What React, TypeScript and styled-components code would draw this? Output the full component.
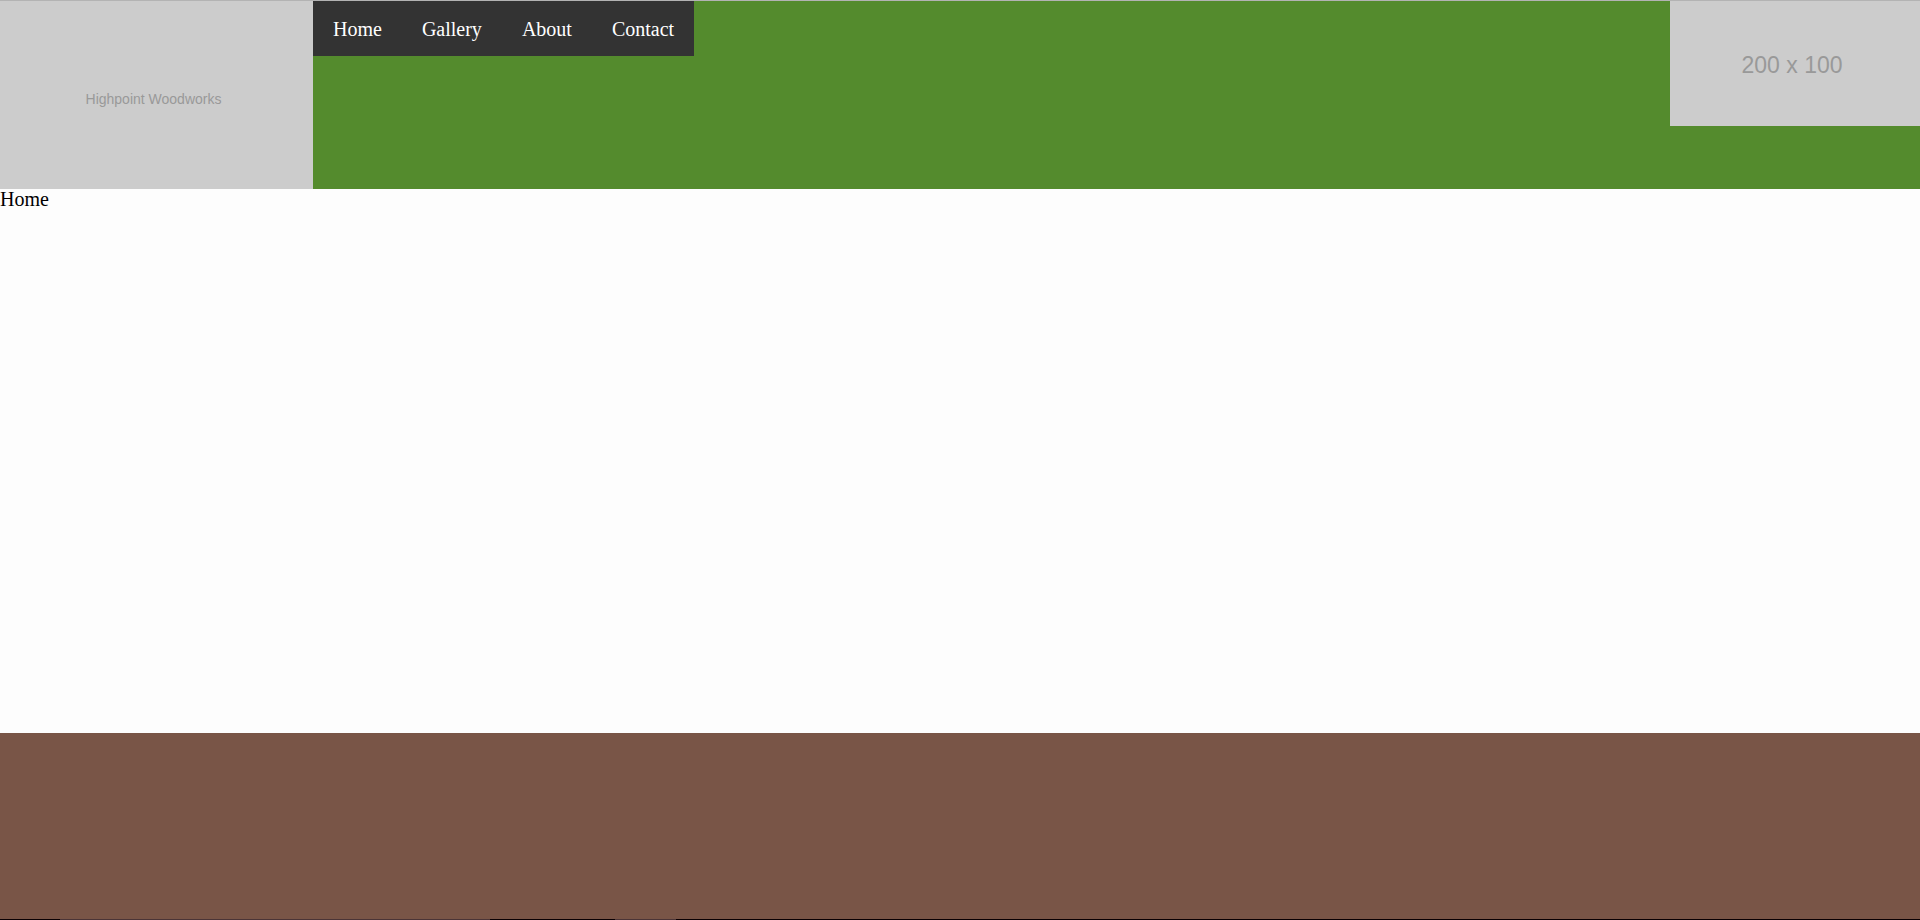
import React from "react";
import styled, { createGlobalStyle } from "styled-components";

const GlobalStyle = createGlobalStyle`
  body {
    margin: 0;
    background: #fdfdfd;
    color: #000;
    font-family: "Liberation Serif", "Times New Roman", serif;
    font-size: 20px;
    line-height: 21px;
  }
`;

const Page = styled.div`
  display: flex;
  flex-direction: column;
  min-height: 100vh;
`;

const Header = styled.header`
  display: flex;
  align-items: flex-start;
  border-top: 1px solid #b3b3b3;
  background: #548b2d;
`;

const Placeholder = styled.div<{ $size: "logo" | "banner" }>`
  box-sizing: border-box;
  display: flex;
  align-items: center;
  justify-content: center;
  flex: none;
  width: ${({ $size }) => ($size === "logo" ? 313 : 250)}px;
  height: ${({ $size }) => ($size === "logo" ? 188 : 125)}px;
  padding: ${({ $size }) => ($size === "logo" ? "8px 6px 0 0" : "4px 6px 0 0")};
  background: #ccc;
  color: #999;
  font-family: "Liberation Sans Narrow", "Liberation Sans", Arial, sans-serif;
  font-size: ${({ $size }) => ($size === "logo" ? 14 : 23)}px;
`;

const NavList = styled.ul`
  display: flex;
  margin: 0;
  padding: 0;
  list-style: none;
  background: #333;
`;

const NavLink = styled.a`
  display: block;
  padding: 18px 20px 16px;
  color: #fff;
  text-decoration: none;
`;

const Spacer = styled.div`
  flex: 1;
`;

const Main = styled.main`
  flex: 1;
`;

const Footer = styled.footer`
  height: 186px;
  background: #795547;
`;

const BottomEdge = styled.div`
  display: flex;
  height: 1px;
  background: #0a0003;
`;

const Segment = styled.div<{ $width: number; $lit?: boolean }>`
  width: ${({ $width }) => $width}px;
  background: ${({ $lit }) => ($lit ? "#4b3436" : "transparent")};
`;

const links = ["Home", "Gallery", "About", "Contact"];

export default function App() {
  return (
    <Page>
      <GlobalStyle />
      <Header>
        <Placeholder $size="logo">Highpoint Woodworks</Placeholder>
        <nav>
          <NavList>
            {links.map((label) => (
              <li key={label}>
                <NavLink href={`#${label.toLowerCase()}`}>{label}</NavLink>
              </li>
            ))}
          </NavList>
        </nav>
        <Spacer />
        <Placeholder $size="banner">200 x 100</Placeholder>
      </Header>
      <Main>Home</Main>
      <Footer />
      <BottomEdge>
        <Segment $width={60} />
        <Segment $width={430} $lit />
        <Segment $width={125} />
        <Segment $width={61} $lit />
      </BottomEdge>
    </Page>
  );
}
